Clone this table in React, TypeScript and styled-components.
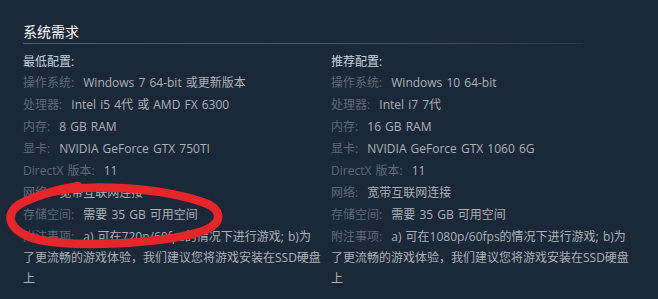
import React from "react";
import styled, { createGlobalStyle } from "styled-components";

const GlobalStyle = createGlobalStyle`
  html, body {
    margin: 0;
    padding: 0;
    background: #1b2838;
  }
`;

type Row = { label: string; value: string };

const minimum: Row[] = [
  { label: "操作系统:", value: "Windows 7 64-bit 或更新版本" },
  { label: "处理器:", value: "Intel i5 4代 或 AMD FX 6300" },
  { label: "内存:", value: "8 GB RAM" },
  { label: "显卡:", value: "NVIDIA GeForce GTX 750TI" },
  { label: "DirectX 版本:", value: "11" },
  { label: "网络:", value: "宽带互联网连接" },
  { label: "存储空间:", value: "需要 35 GB 可用空间" },
  {
    label: "附注事项:",
    value: "a) 可在720p/60fps的情况下进行游戏; b)为了更流畅的游戏体验，我们建议您将游戏安装在SSD硬盘上",
  },
];

const recommended: Row[] = [
  { label: "操作系统:", value: "Windows 10 64-bit" },
  { label: "处理器:", value: "Intel i7 7代" },
  { label: "内存:", value: "16 GB RAM" },
  { label: "显卡:", value: "NVIDIA GeForce GTX 1060 6G" },
  { label: "DirectX 版本:", value: "11" },
  { label: "网络:", value: "宽带互联网连接" },
  { label: "存储空间:", value: "需要 35 GB 可用空间" },
  {
    label: "附注事项:",
    value: "a) 可在1080p/60fps的情况下进行游戏; b)为了更流畅的游戏体验，我们建议您将游戏安装在SSD硬盘上",
  },
];

const Column = ({ title, rows }: { title: string; rows: Row[] }) => (
  <Col>
    <Heading>{title}</Heading>
    <List>
      {rows.map((row, index) => (
        <Item key={index}>
          <Label>{row.label}</Label> {row.value}
        </Item>
      ))}
    </List>
  </Col>
);

const App = () => {
  return (
    <Page>
      <GlobalStyle />
      <Title>系统需求</Title>
      <Divider />
      <Columns>
        <Column title="最低配置:" rows={minimum} />
        <Column title="推荐配置:" rows={recommended} />
      </Columns>
      <Scribble viewBox="0 0 658 299" width="658" height="299">
        <path
          d="M 40 195 C 90 180, 170 190, 205 203 C 224 210, 224 226, 196 233 C 160 243, 80 248, 40 240 C 10 233, 2 215, 20 204 C 35 196, 55 190, 78 186"
          fill="none"
          stroke="#e5272b"
          strokeWidth="8.5"
          strokeLinecap="round"
          strokeLinejoin="round"
        />
      </Scribble>
    </Page>
  );
};

export default App;

const Page = styled.div`
  position: relative;
  width: 658px;
  height: 299px;
  box-sizing: border-box;
  padding: 22px 0 0 23px;
  overflow: hidden;
  background: #1b2838;
  font-family: "Open Sans", "Noto Sans CJK SC", sans-serif;
`;

const Title = styled.h2`
  margin: 0;
  font-size: 14px;
  font-weight: normal;
  line-height: 20px;
  color: #ffffff;
`;

const Divider = styled.div`
  margin-top: 1px;
  width: 560px;
  height: 1px;
  background: linear-gradient(
    to right,
    rgba(76, 100, 122, 1) 0%,
    rgba(60, 82, 102, 1) 75%,
    rgba(40, 56, 74, 1) 100%
  );
`;

const Columns = styled.div`
  display: grid;
  grid-template-columns: 298px 300px;
  column-gap: 10px;
  margin-top: 9px;
`;

const Col = styled.div`
  display: flex;
  flex-direction: column;
`;

const Heading = styled.div`
  font-size: 12px;
  line-height: 18px;
  color: #c6d4df;
  margin-bottom: 0.5px;
`;

const List = styled.ul`
  list-style: none;
  margin: 0;
  padding: 0;
`;

const Item = styled.li`
  font-size: 12px;
  line-height: 21px;
  margin-bottom: 1px;
  color: #acb2b8;
  word-spacing: 1px;
`;

const Label = styled.strong`
  font-weight: normal;
  color: #5f6b77;
  margin-right: 5px;
`;

const Scribble = styled.svg`
  position: absolute;
  left: 0;
  top: 0;
  pointer-events: none;
`;
